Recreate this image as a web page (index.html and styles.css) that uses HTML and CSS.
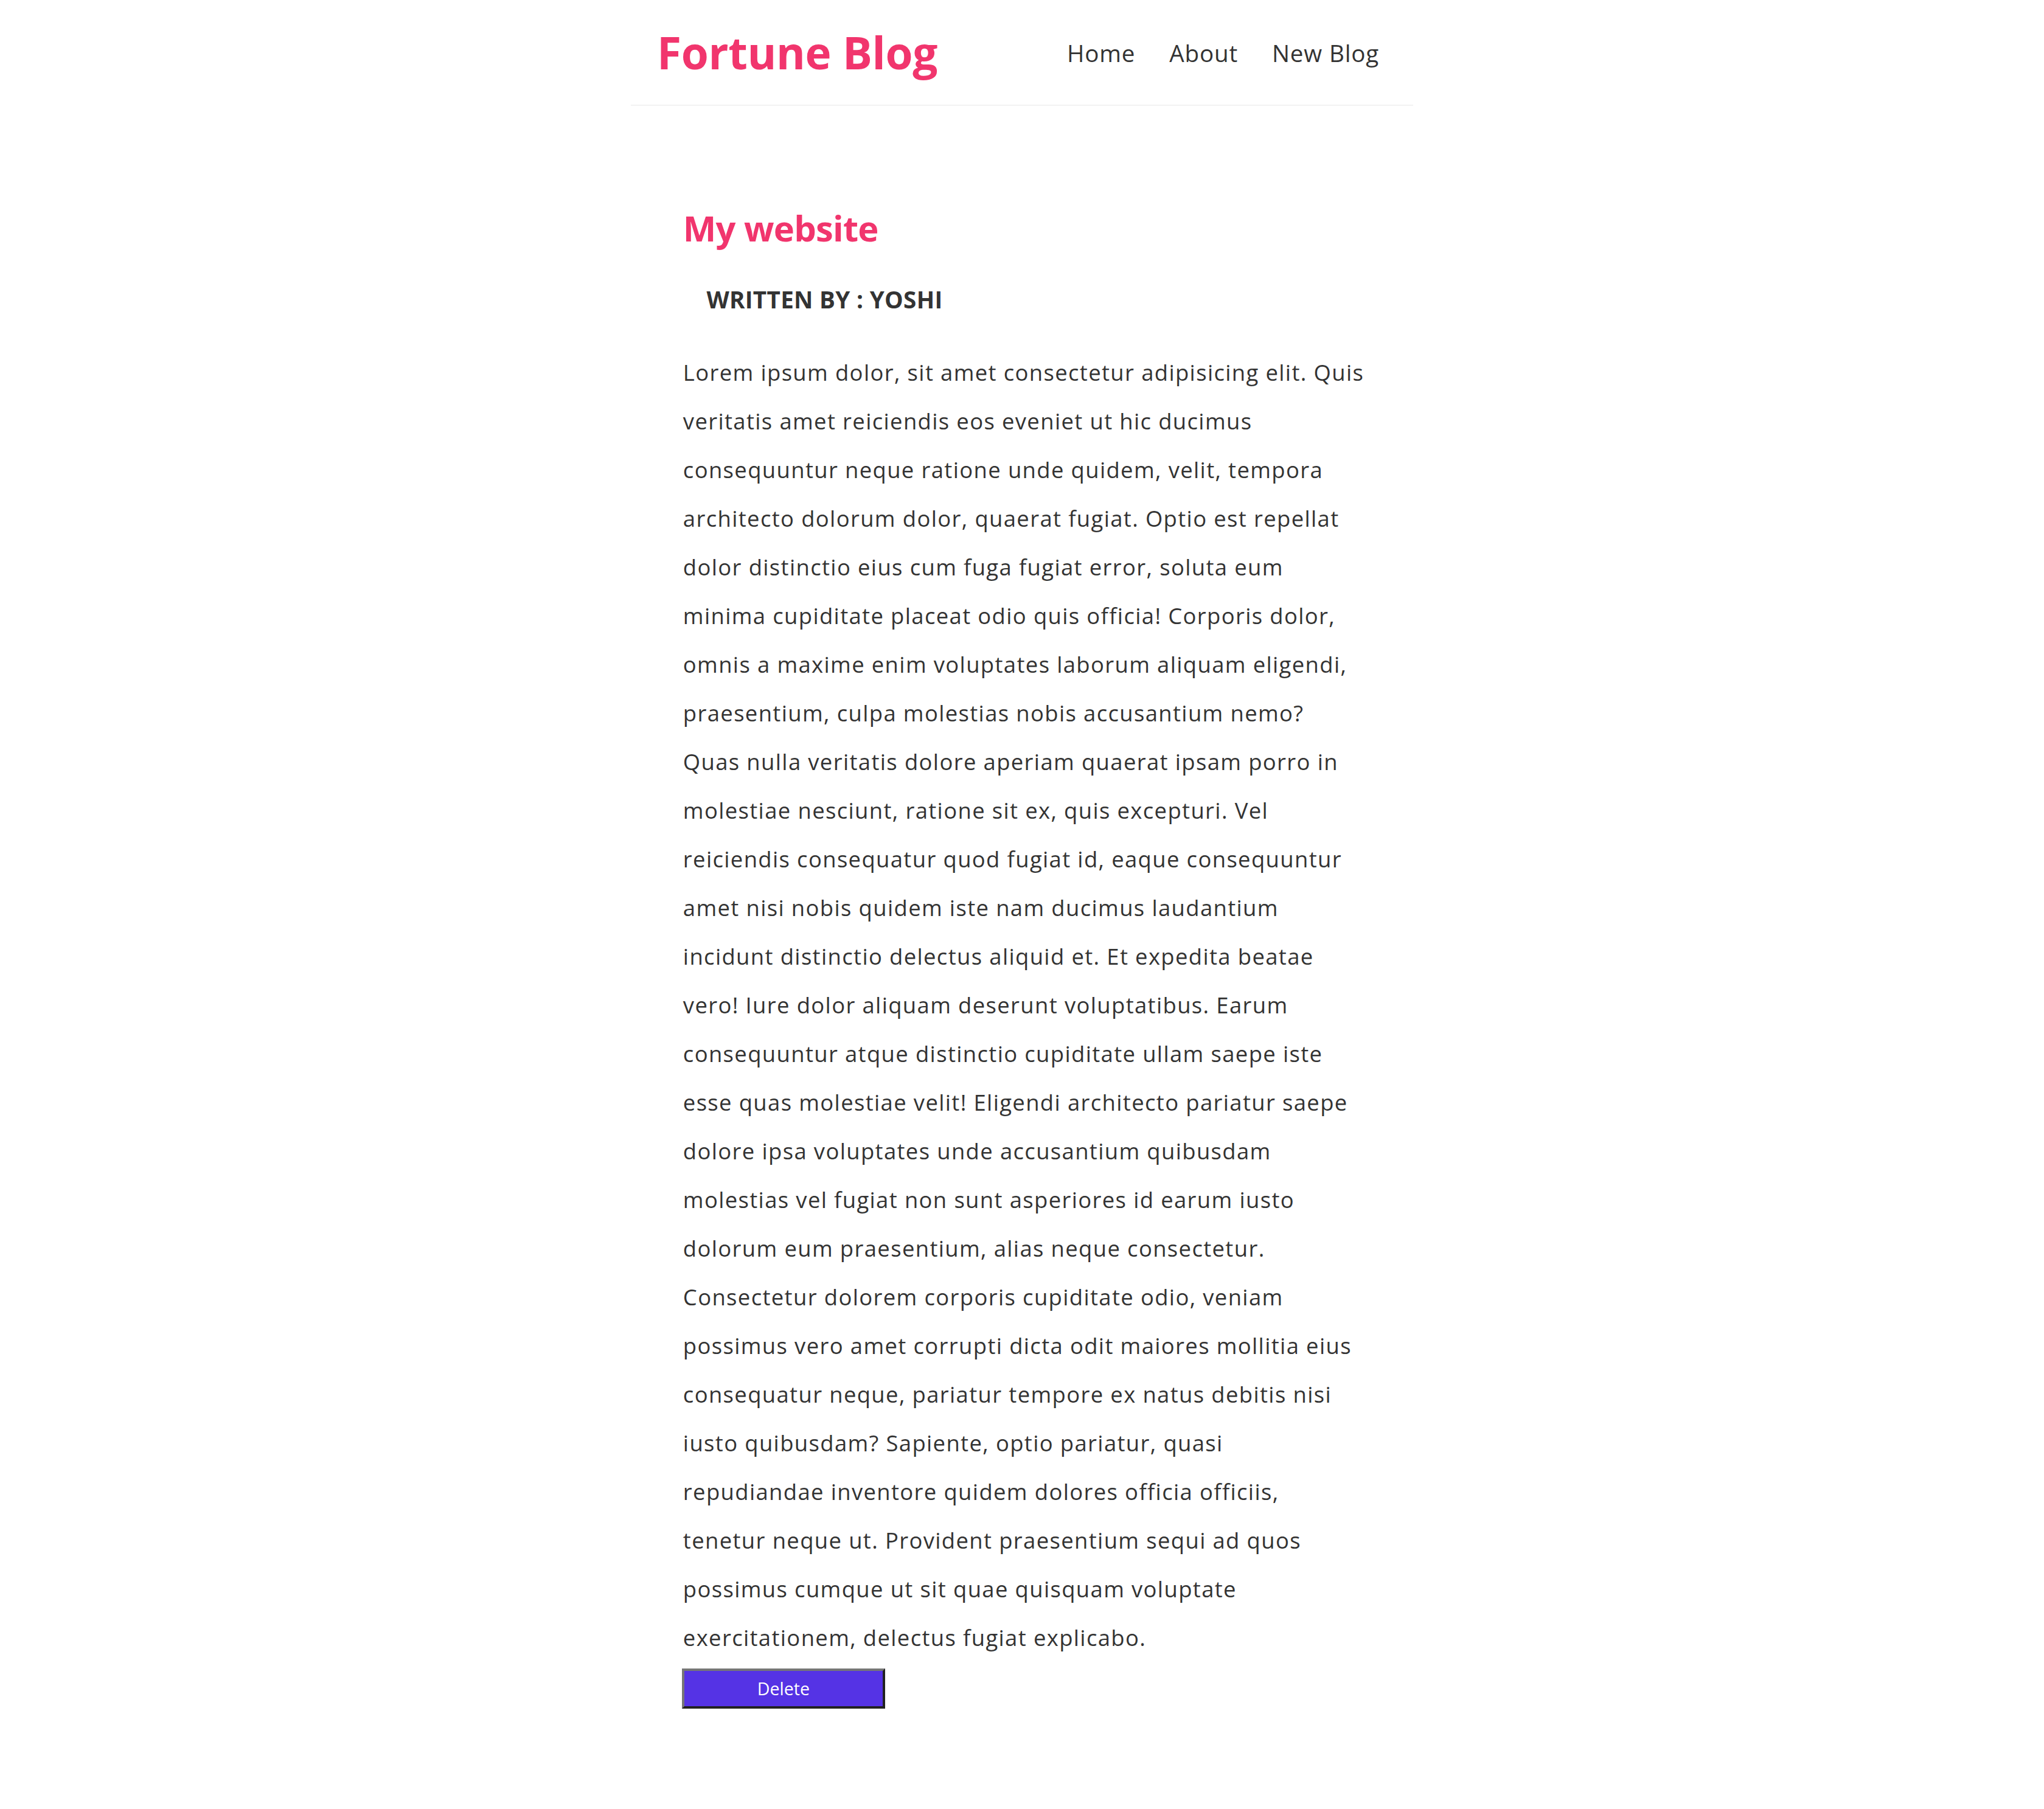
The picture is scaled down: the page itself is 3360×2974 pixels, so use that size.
FILE: index.html
```html
<!DOCTYPE html>
<html lang="en">
<head>
<meta charset="utf-8">
<title>Fortune Blog</title>
<link rel="stylesheet" href="styles.css">
</head>
<body>
<div class="app">
  <nav class="navbar">
    <h1 class="brand">Fortune Blog</h1>
    <div class="links">
      <a class="link" href="#">Home</a>
      <a class="link" href="#">About</a>
      <a class="link" href="#">New Blog</a>
    </div>
  </nav>
  <main class="content">
    <article class="blog-details">
      <h2 class="blog-title">My website</h2>
      <p class="author">WRITTEN BY : YOSHI</p>
      <p class="body">Lorem ipsum dolor, sit amet consectetur adipisicing elit. Quis<br>
veritatis amet reiciendis eos eveniet ut hic ducimus<br>
consequuntur neque ratione unde quidem, velit, tempora<br>
architecto dolorum dolor, quaerat fugiat. Optio est repellat<br>
dolor distinctio eius cum fuga fugiat error, soluta eum<br>
minima cupiditate placeat odio quis officia! Corporis dolor,<br>
omnis a maxime enim voluptates laborum aliquam eligendi,<br>
praesentium, culpa molestias nobis accusantium nemo?<br>
Quas nulla veritatis dolore aperiam quaerat ipsam porro in<br>
molestiae nesciunt, ratione sit ex, quis excepturi. Vel<br>
reiciendis consequatur quod fugiat id, eaque consequuntur<br>
amet nisi nobis quidem iste nam ducimus laudantium<br>
incidunt distinctio delectus aliquid et. Et expedita beatae<br>
vero! Iure dolor aliquam deserunt voluptatibus. Earum<br>
consequuntur atque distinctio cupiditate ullam saepe iste<br>
esse quas molestiae velit! Eligendi architecto pariatur saepe<br>
dolore ipsa voluptates unde accusantium quibusdam<br>
molestias vel fugiat non sunt asperiores id earum iusto<br>
dolorum eum praesentium, alias neque consectetur.<br>
Consectetur dolorem corporis cupiditate odio, veniam<br>
possimus vero amet corrupti dicta odit maiores mollitia eius<br>
consequatur neque, pariatur tempore ex natus debitis nisi<br>
iusto quibusdam? Sapiente, optio pariatur, quasi<br>
repudiandae inventore quidem dolores officia officiis,<br>
tenetur neque ut. Provident praesentium sequi ad quos<br>
possimus cumque ut sit quae quisquam voluptate<br>
exercitationem, delectus fugiat explicabo.</p>
      <button class="delete-btn" type="button">Delete</button>
    </article>
  </main>
</div>
</body>
</html>
```

FILE: styles.css
```css
html {
  zoom: 2.142857;
  background: #fff;
}

body {
  margin: 0;
  font-family: "Open Sans", "Noto Sans", sans-serif;
  color: #333;
}

.navbar {
  box-sizing: border-box;
  width: 600px;
  height: 81px;
  margin: 0 auto;
  padding: 0 20px;
  display: flex;
  align-items: center;
  border-bottom: 1px solid #f2f2f2;
}

.brand {
  margin: 0;
  font-size: 34px;
  line-height: 40px;
  font-weight: 700;
  color: #f1356d;
  letter-spacing: -0.15px;
}

.links {
  margin-left: auto;
  margin-top: 2px;
  line-height: 24px;
  font-size: 18px;
  letter-spacing: 0.4px;
}

.link {
  margin-left: 9px;
  padding: 6px;
  color: #333;
  text-decoration: none;
}

.content {
  box-sizing: border-box;
  width: 600px;
  margin: 40px auto;
  padding: 20px;
}

.blog-details {
  padding: 17px 20px 16px;
}

.blog-title {
  margin: 0;
  font-size: 27px;
  line-height: 34px;
  font-weight: 700;
  color: #f1356d;
  letter-spacing: -0.35px;
}

.author {
  margin: 26px 0 0;
  padding-left: 18px;
  font-size: 18px;
  line-height: 24px;
  font-weight: 700;
  color: #333;
  letter-spacing: 0.15px;
}

.body {
  margin: 25px 0 0;
  font-size: 17px;
  line-height: 37.33px;
  white-space: nowrap;
  color: #333;
  letter-spacing: 0.64px;
}

.delete-btn {
  display: block;
  box-sizing: border-box;
  width: 156px;
  height: 31px;
  margin: 5px 0 0 -1px;
  padding: 0;
  background: #5533e5;
  color: #fff;
  font-family: "Open Sans", "Noto Sans", sans-serif;
  font-size: 13.33px;
  border-style: solid;
  border-width: 2px;
  border-color: #767676 #222 #222 #767676;
  cursor: pointer;
}
```
